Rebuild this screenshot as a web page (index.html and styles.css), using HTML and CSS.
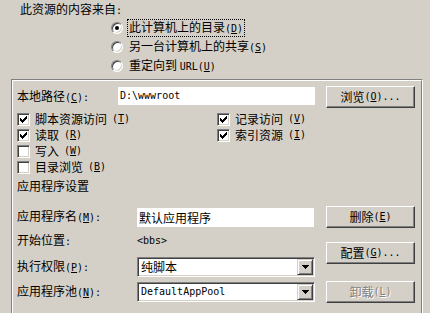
FILE: index.html
```html
<!DOCTYPE html>
<html>
<head>
<meta charset="utf-8">
<link rel="stylesheet" href="styles.css">
</head>
<body>
<div class="title">此资源的内容来自<span class="m">:</span></div>
<div class="radios">
  <div class="radio-row"><span class="radio on"></span><span class="focus">此计算机上的目录<span class="m">(<u>D</u>)</span></span></div>
  <div class="radio-row"><span class="radio"></span><span class="rtext">另一台计算机上的共享<span class="m">(<u>S</u>)</span></span></div>
  <div class="radio-row"><span class="radio"></span><span class="rtext">重定向到 <span class="m">URL(<u>U</u>)</span></span></div>
</div>
<div class="group">
  <div class="group-in">
    <div class="path-row">
      <span class="path-label">本地路径<span class="m">(<u>C</u>):</span></span>
      <div class="edit path-edit m">D:\wwwroot</div>
      <div class="btn">浏览<span class="m">(<u>O</u>)...</span></div>
    </div>
    <div class="checks">
      <div class="chk-item"><span class="chk on"><svg width="7" height="7" viewBox="0 0 7 7"><path d="M0 2h1v3h-1zM1 3h1v3h-1zM2 4h1v3h-1zM3 3h1v3h-1zM4 2h1v3h-1zM5 1h1v3h-1zM6 0h1v3h-1z"/></svg></span>脚本资源访问<span class="m">(<u>T</u>)</span></div>
      <div class="chk-item"><span class="chk on"><svg width="7" height="7" viewBox="0 0 7 7"><path d="M0 2h1v3h-1zM1 3h1v3h-1zM2 4h1v3h-1zM3 3h1v3h-1zM4 2h1v3h-1zM5 1h1v3h-1zM6 0h1v3h-1z"/></svg></span>记录访问<span class="m">(<u>V</u>)</span></div>
      <div class="chk-item"><span class="chk on"><svg width="7" height="7" viewBox="0 0 7 7"><path d="M0 2h1v3h-1zM1 3h1v3h-1zM2 4h1v3h-1zM3 3h1v3h-1zM4 2h1v3h-1zM5 1h1v3h-1zM6 0h1v3h-1z"/></svg></span>读取<span class="m">(<u>R</u>)</span></div>
      <div class="chk-item"><span class="chk on"><svg width="7" height="7" viewBox="0 0 7 7"><path d="M0 2h1v3h-1zM1 3h1v3h-1zM2 4h1v3h-1zM3 3h1v3h-1zM4 2h1v3h-1zM5 1h1v3h-1zM6 0h1v3h-1z"/></svg></span>索引资源<span class="m">(<u>I</u>)</span></div>
      <div class="chk-item"><span class="chk"></span>写入<span class="m">(<u>W</u>)</span></div>
      <div></div>
      <div class="chk-item"><span class="chk"></span>目录浏览<span class="m">(<u>B</u>)</span></div>
      <div></div>
    </div>
    <div class="section">应用程序设置</div>
    <div class="lower">
      <div class="fields">
        <div class="frow r-name"><span class="flabel">应用程序名<span class="m">(<u>M</u>):</span></span><div class="edit name-edit">默认应用程序</div></div>
        <div class="frow r-start"><span class="flabel">开始位置<span class="m">:</span></span><span class="m">&lt;bbs&gt;</span></div>
        <div class="frow r-perm"><span class="flabel">执行权限<span class="m">(<u>P</u>):</span></span><div class="select"><span class="sel-text">纯脚本</span><span class="drop"><svg width="7" height="4" viewBox="0 0 7 4"><path d="M0 0h7v1h-1v1h-1v1h-1v1h-1v-1h-1v-1h-1v-1h-1z"/></svg></span></div></div>
        <div class="frow r-pool"><span class="flabel">应用程序池<span class="m">(<u>N</u>):</span></span><div class="select"><span class="sel-text m">DefaultAppPool</span><span class="drop"><svg width="7" height="4" viewBox="0 0 7 4"><path d="M0 0h7v1h-1v1h-1v1h-1v1h-1v-1h-1v-1h-1v-1h-1z"/></svg></span></div></div>
      </div>
      <div class="buttons">
        <div class="btn b-del">删除<span class="m">(<u>E</u>)</span></div>
        <div class="btn b-cfg">配置<span class="m">(<u>G</u>)...</span></div>
        <div class="btn b-unl disabled">卸载<span class="m">(<u>L</u>)</span></div>
      </div>
    </div>
  </div>
</div>
</body>
</html>
```
FILE: styles.css
```css
* { box-sizing: border-box; }
html, body { margin: 0; padding: 0; }
body {
  width: 430px;
  height: 313px;
  overflow: hidden;
  background: #d4d0c8;
  color: #000;
  font-family: "Noto Sans CJK SC", sans-serif;
  font-size: 12px;
  line-height: 14px;
}
.m {
  font-family: "DejaVu Sans Mono", monospace;
  font-size: 10px;
}
u { text-decoration: underline; text-underline-offset: 1px; }

.title { padding: 2px 0 0 20px; height: 18px; }

.radios { margin-left: 111px; }
.radio-row { display: flex; align-items: center; height: 19px; gap: 4px; }
.radio {
  flex: none;
  position: relative;
  width: 12px;
  height: 12px;
  border-radius: 50%;
  background: #fff;
  border: 1px solid;
  border-color: #808080 #fff #fff #808080;
  box-shadow: inset 1px 1px #404040, inset -1px -1px #d4d0c8;
}
.radio.on::after {
  content: "";
  position: absolute;
  left: 3px;
  top: 3px;
  width: 4px;
  height: 4px;
  border-radius: 50%;
  background: #000;
}
.focus { border: 1px dotted #000; padding: 0 1px; line-height: 14px; }
.rtext { padding-left: 2px; }

.group {
  margin: 4px 0 0 11px;
  width: 412px;
  height: 234px;
  border: 1px solid;
  border-bottom: none;
  border-color: #808080 #fff #fff #808080;
}
.group-in {
  height: 100%;
  border: 1px solid;
  border-bottom: none;
  border-color: #fff #808080 #808080 #fff;
  padding: 5px 0 0 4px;
}

.path-row { display: flex; align-items: center; height: 22px; }
.path-label { width: 101px; flex: none; }
.edit {
  background: #fff;
  height: 18px;
  line-height: 18px;
  padding-left: 2px;
  flex: none;
}
.path-edit { width: 197px; margin-top: -2px; }

.btn {
  flex: none;
  width: 89px;
  height: 22px;
  display: flex;
  align-items: center;
  justify-content: center;
  border: 1px solid;
  border-color: #fff #404040 #404040 #fff;
  box-shadow: inset -1px -1px #808080;
  background: #d4d0c8;
}
.path-row .btn { margin-left: 11px; }
.btn.disabled { color: #808080; text-shadow: 1px 1px 0 #fff; }

.checks {
  margin-top: 3px;
  display: grid;
  grid-template-columns: 200px 1fr;
  grid-auto-rows: 16px;
}
.chk-item { display: flex; align-items: center; gap: 5px; }
.chk {
  flex: none;
  width: 13px;
  height: 13px;
  background: #fff;
  border: 1px solid;
  border-color: #808080 #fff #fff #808080;
  box-shadow: inset 1px 1px #404040, inset -1px -1px #d4d0c8;
  display: flex;
  align-items: center;
  justify-content: center;
}
.chk svg { display: block; fill: #000; }

.section { margin-top: 3px; height: 16px; line-height: 16px; }

.lower { margin-top: 12px; display: flex; }
.fields { width: 298px; flex: none; }
.frow { display: flex; align-items: center; height: 22px; }
.flabel { width: 120px; flex: none; }
.r-start { margin-top: 2px; }
.r-perm { margin-top: 4px; }
.r-pool { margin-top: 3px; }
.name-edit { width: 177px; height: 19px; line-height: 19px; }

.select {
  width: 178px;
  height: 20px;
  display: flex;
  align-items: center;
  background: #fff;
  border: 1px solid;
  border-color: #808080 #fff #fff #808080;
  box-shadow: inset 1px 1px #404040, inset -1px -1px #d4d0c8;
  padding: 1px;
}
.sel-text { flex: 1; padding-left: 2px; }
.drop {
  flex: none;
  width: 16px;
  height: 16px;
  display: flex;
  align-items: center;
  justify-content: center;
  background: #d4d0c8;
  border: 1px solid;
  border-color: #d4d0c8 #404040 #404040 #d4d0c8;
  box-shadow: inset 1px 1px #fff, inset -1px -1px #808080;
}
.drop svg { display: block; fill: #000; }

.buttons { margin-left: 11px; display: flex; flex-direction: column; }
.b-cfg { margin-top: 14px; }
.b-unl { margin-top: 17px; }
```
